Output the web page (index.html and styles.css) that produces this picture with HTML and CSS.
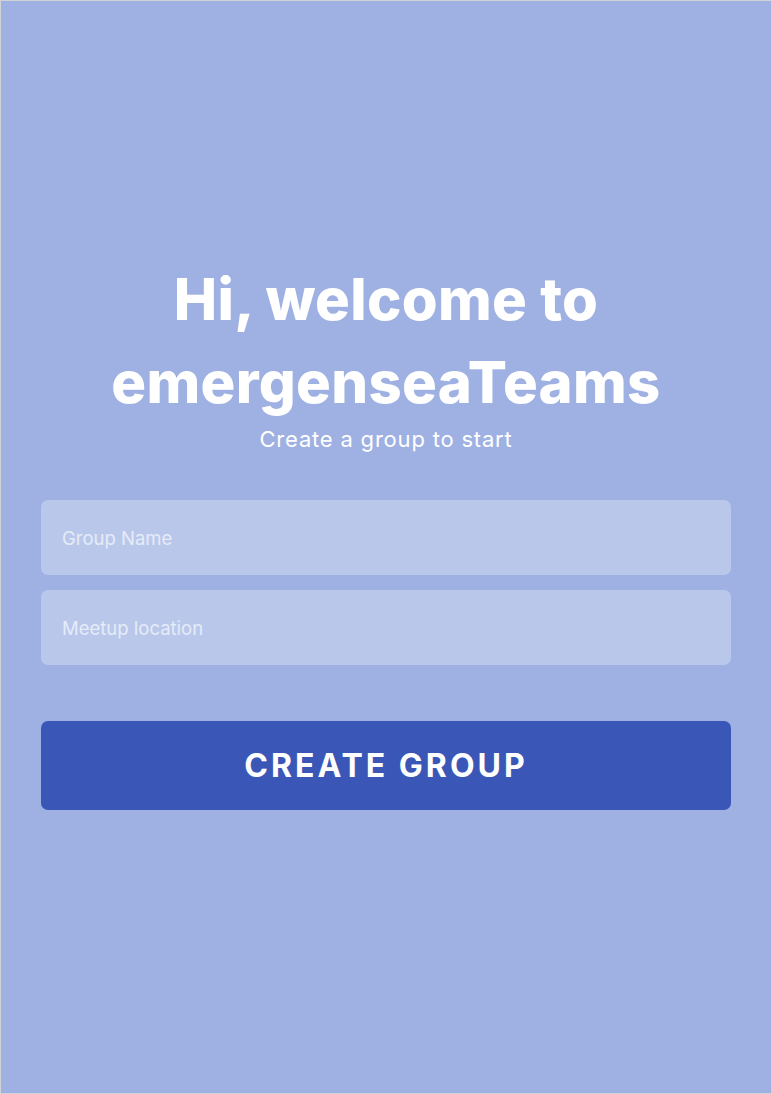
FILE: index.html
```html
<!DOCTYPE html>
<html lang="en">
<head>
<meta charset="utf-8">
<title>emergenseaTeams</title>
<link rel="stylesheet" href="styles.css">
</head>
<body>
<main class="page">
  <section class="hero">
    <h1 class="title">Hi, welcome to<br>emergenseaTeams</h1>
    <p class="subtitle">Create a group to start</p>
  </section>
  <form class="form">
    <input class="field" type="text" placeholder="Group Name">
    <input class="field" type="text" placeholder="Meetup location">
    <button class="btn" type="button">CREATE GROUP</button>
  </form>
</main>
</body>
</html>
```
FILE: styles.css
```css
* { box-sizing: border-box; }
html, body { margin: 0; padding: 0; }
body {
  font-family: "Inter", "Noto Sans", sans-serif;
  background: #ffffff;
}
.page {
  width: 772px;
  height: 1094px;
  border: 1px solid #d2d3d6;
  background: #9eb1e2;
  display: flex;
  flex-direction: column;
  justify-content: center;
  padding: 0 40px 26px;
}
.hero {
  text-align: center;
  color: #ffffff;
}
.title {
  margin: 0;
  font-size: 58px;
  font-weight: 800;
  line-height: 83px;
  letter-spacing: 0.3px;
}
.subtitle {
  margin: 0;
  font-size: 22px;
  font-weight: 400;
  line-height: 30px;
  letter-spacing: 0.8px;
}
.form {
  margin-top: 46px;
  display: flex;
  flex-direction: column;
  gap: 15px;
}
.field {
  height: 75px;
  border: none;
  border-radius: 7px;
  background: #b9c8ea;
  padding: 0 21px;
  font-family: inherit;
  font-size: 18.5px;
  color: #ffffff;
  outline: none;
}
.field::placeholder {
  color: #e6ebf8;
}
.btn {
  margin-top: 41px;
  height: 89px;
  border: none;
  border-radius: 7px;
  background: #3a57b8;
  color: #ffffff;
  font-family: inherit;
  font-size: 32px;
  font-weight: 700;
  letter-spacing: 3px;
}
```
